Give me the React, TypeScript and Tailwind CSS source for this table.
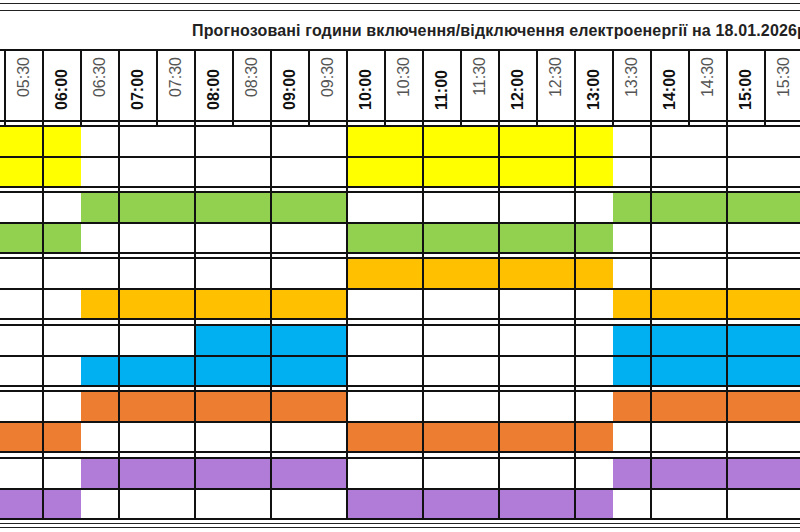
const times = [
  '05:00', '05:30', '06:00', '06:30', '07:00', '07:30', '08:00', '08:30', '09:00', '09:30', '10:00',
  '10:30', '11:00', '11:30', '12:00', '12:30', '13:00', '13:30', '14:00', '14:30', '15:00', '15:30',
];

// one char per half hour, 05:00 .. 15:30
const A = '1110000000111111100000';
const B = '0001111111000000011111';
const C = '0000000000111111100000';
const D = '0000001111000000011111';

const groups = [
  { color: 'bg-[#ffff00]', rows: [A, A], gap: 'h-[3px]' },
  { color: 'bg-[#92d050]', rows: [B, A], gap: 'h-[3px]' },
  { color: 'bg-[#ffc000]', rows: [C, B], gap: 'h-[4px]' },
  { color: 'bg-[#00b0f0]', rows: [D, B], gap: 'h-[3px]' },
  { color: 'bg-[#ed7d31]', rows: [B, A], gap: 'h-[4px]' },
  { color: 'bg-[#b07cd8]', rows: [B, A], gap: 'h-[3px]' },
];

const hours = Array.from({ length: 11 }, (_, i) => i);

const HourTicks = ({ height }: { height: string }) => (
  <div className={`flex ${height}`}>
    {hours.map((h) => (
      <div key={h} className="w-[76px] shrink-0 border-l-2 border-[#111]" />
    ))}
  </div>
);

const ScheduleRow = ({ pattern, color, last }: { pattern: string; color: string; last?: boolean }) => (
  <div className={`flex ${last ? 'h-[28px]' : 'h-[31px] border-b-2 border-[#111]'}`}>
    {hours.map((h) => (
      <div key={h} className="flex w-[76px] shrink-0 border-l-2 border-[#111]">
        <div className={`w-[37px] ${pattern[h * 2] === '1' ? color : 'bg-white'}`} />
        <div className={`flex-1 ${pattern[h * 2 + 1] === '1' ? color : 'bg-white'}`} />
      </div>
    ))}
  </div>
);

export default function App() {
  return (
    <div className="h-[532px] w-[800px] overflow-hidden bg-white font-['Liberation_Sans',Arial,sans-serif]">
      <div className="-ml-[34px] w-[836px]">
        {/* Outer double border */}
        <div className="mt-[3px] h-px bg-[#222]" />
        <div className="mt-[6px] h-px bg-[#222]" />

        {/* Title */}
        <div className="flex h-[40px] items-center whitespace-nowrap border-b-2 border-[#111] pl-[226px] pt-px text-[16px] font-bold tracking-[0.15px] text-[#222]">
          Прогнозовані години включення/відключення електроенергії на 18.01.2026р.
        </div>

        {/* Time header; first column (05:00) lies outside the crop */}
        <div className="flex h-[71px] border-b-2 border-[#111]">
          {times.map((t, i) => {
            const bold = t.endsWith(':00');
            return (
              <div
                key={t}
                className={`flex w-[38px] shrink-0 justify-center border-l-2 border-[#111] ${
                  bold ? 'items-end pb-[10px]' : 'items-start pt-[6px]'
                }`}
              >
                {i > 0 && (
                  <span
                    className={`rotate-180 text-[16px] leading-none [writing-mode:vertical-rl] ${
                      bold ? 'font-bold text-[#111]' : 'text-[#555]'
                    }`}
                  >
                    {t}
                  </span>
                )}
              </div>
            );
          })}
        </div>
        <div className="flex h-[3px]">
          {times.map((t) => (
            <div key={t} className="w-[38px] shrink-0 border-l-2 border-[#111]" />
          ))}
        </div>

        {/* Queues */}
        {groups.map((g, i) => (
          <div key={i}>
            <div className="border-y-2 border-[#111]">
              <ScheduleRow pattern={g.rows[0]} color={g.color} />
              <ScheduleRow pattern={g.rows[1]} color={g.color} last />
            </div>
            {i < groups.length - 1 && <HourTicks height={g.gap} />}
          </div>
        ))}

        <div className="mt-[3px] h-px bg-[#222]" />
        <div className="mt-[3px] h-px bg-[#222]" />
      </div>
    </div>
  );
}
